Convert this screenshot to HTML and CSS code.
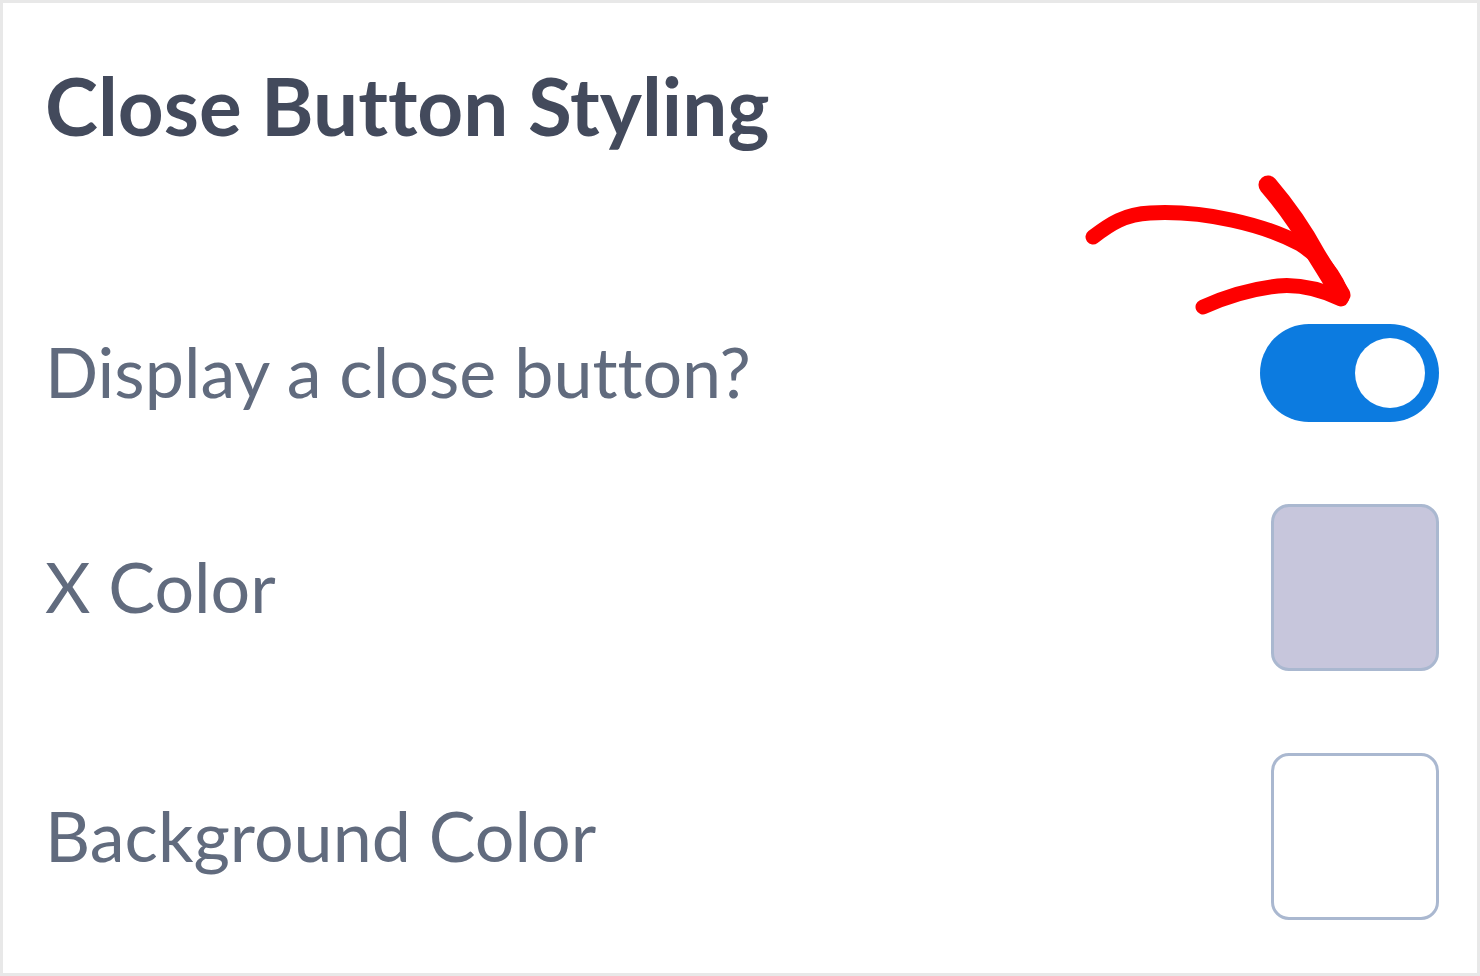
FILE: index.html
```html
<!DOCTYPE html>
<html lang="en">
<head>
<meta charset="utf-8">
<title>Close Button Styling</title>
<link rel="stylesheet" href="styles.css">
</head>
<body>
<div class="panel">
  <h1 class="title">Close Button Styling</h1>
  <div class="rows">
    <div class="row">
      <span class="label">Display a close button?</span>
      <span class="toggle"><span class="knob"></span></span>
    </div>
    <div class="row">
      <span class="label">X Color</span>
      <span class="swatch swatch-x"></span>
    </div>
    <div class="row">
      <span class="label">Background Color</span>
      <span class="swatch swatch-bg"></span>
    </div>
  </div>
  <svg class="arrow" width="300" height="160" viewBox="1070 170 300 160" xmlns="http://www.w3.org/2000/svg">
    <g fill="none" stroke="#fe0000" stroke-linecap="round" stroke-linejoin="round">
      <path d="M1093 237 C1110 224 1125 214 1150 213 C1205 210 1265 225 1300 244 C1322 258 1334 275 1341 292" stroke-width="15"/>
      <path d="M1268 185 C1286 206 1304 232 1317 256 C1327 272 1335 285 1341 295" stroke-width="19"/>
      <path d="M1203 307 C1225 297 1250 289 1278 286 C1300 284 1322 290 1341 299" stroke-width="15"/>
    </g>
  </svg>
</div>
</body>
</html>
```
FILE: styles.css
```css
html, body {
  margin: 0;
  padding: 0;
  background: #ffffff;
}

.panel {
  position: relative;
  box-sizing: border-box;
  width: 1480px;
  height: 976px;
  border: 3px solid #e8e8e8;
  padding: 62px 38px 0 42px;
  font-family: "Lato", "Liberation Sans", sans-serif;
  font-variant-ligatures: none;
}

.title {
  margin: 0;
  font-size: 80px;
  line-height: 1;
  font-weight: 700;
  color: #434a5c;
}

.rows {
  display: flex;
  flex-direction: column;
  gap: 82px;
  margin-top: 179px;
}

.row {
  display: flex;
  align-items: center;
  justify-content: space-between;
}

.label {
  font-size: 70px;
  line-height: 1;
  color: #616b7e;
  margin-top: -4px;
}

.toggle {
  display: flex;
  align-items: center;
  justify-content: flex-end;
  box-sizing: border-box;
  width: 179px;
  height: 98px;
  padding-right: 14px;
  border-radius: 49px;
  background: #0c7be0;
}

.knob {
  width: 70px;
  height: 70px;
  border-radius: 50%;
  background: #ffffff;
}

.swatch {
  box-sizing: border-box;
  width: 168px;
  height: 167px;
  border: 3px solid #aab8d0;
  border-radius: 18px;
}

.swatch-x {
  background: #c7c6dc;
}

.swatch-bg {
  background: #ffffff;
}

.arrow {
  position: absolute;
  left: 1067px;
  top: 167px;
}
```
